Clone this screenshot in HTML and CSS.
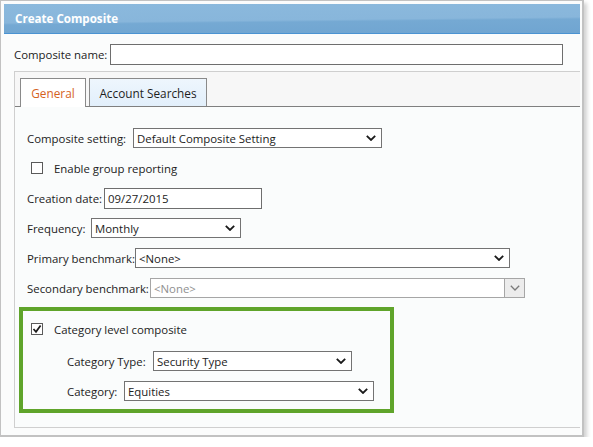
FILE: index.html
```html
<!DOCTYPE html>
<html>
<head>
<meta charset="utf-8">
<link rel="stylesheet" href="styles.css">
</head>
<body>
<div class="window">
  <div class="titlebar">Create Composite</div>
  <div class="body">
    <div class="name-row">
      <span class="label lbl-name">Composite name:</span>
      <div class="textbox name-input"></div>
    </div>
    <div class="panel">
      <div class="tabs">
        <div class="tab tab-active">General</div>
        <div class="tab tab-blue">Account Searches</div>
      </div>
      <div class="tab-content">
        <div class="row">
          <span class="label lbl-setting">Composite setting:</span>
          <div class="select sel-setting"><span>Default Composite Setting</span><svg class="chev" width="10" height="6" viewBox="0 0 10 6"><path d="M0.8 0.8 L5 5 L9.2 0.8"/></svg></div>
        </div>
        <div class="row">
          <span class="checkbox"></span>
          <span class="label check-label">Enable group reporting</span>
        </div>
        <div class="row">
          <span class="label lbl-date">Creation date:</span>
          <div class="textbox date-input">09/27/2015</div>
        </div>
        <div class="row">
          <span class="label lbl-freq">Frequency:</span>
          <div class="select sel-freq"><span>Monthly</span><svg class="chev" width="10" height="6" viewBox="0 0 10 6"><path d="M0.8 0.8 L5 5 L9.2 0.8"/></svg></div>
        </div>
        <div class="row">
          <span class="label lbl-primary">Primary benchmark:</span>
          <div class="select sel-primary"><span>&lt;None&gt;</span><svg class="chev" width="10" height="6" viewBox="0 0 10 6"><path d="M0.8 0.8 L5 5 L9.2 0.8"/></svg></div>
        </div>
        <div class="row">
          <span class="label lbl-secondary">Secondary benchmark:</span>
          <div class="select select-disabled sel-secondary"><span>&lt;None&gt;</span><span class="drop-btn"><svg class="chev chev-dis" width="10" height="6" viewBox="0 0 10 6"><path d="M0.8 0.8 L5 5 L9.2 0.8"/></svg></span></div>
        </div>
        <div class="highlight">
          <div class="row row-in">
            <span class="checkbox checked"><svg width="10" height="10" viewBox="0 0 10 10"><path d="M1.5 5 L4 7.8 L8.6 1.4"/></svg></span>
            <span class="label check-label">Category level composite</span>
          </div>
          <div class="row row-sub">
            <span class="label lbl-cattype">Category Type:</span>
            <div class="select sel-cattype"><span>Security Type</span><svg class="chev" width="10" height="6" viewBox="0 0 10 6"><path d="M0.8 0.8 L5 5 L9.2 0.8"/></svg></div>
          </div>
          <div class="row row-sub">
            <span class="label lbl-cat">Category:</span>
            <div class="select sel-cat"><span>Equities</span><svg class="chev" width="10" height="6" viewBox="0 0 10 6"><path d="M0.8 0.8 L5 5 L9.2 0.8"/></svg></div>
          </div>
        </div>
      </div>
    </div>
  </div>
</div>
</body>
</html>
```
FILE: styles.css
```css
html, body {
  margin: 0;
  padding: 0;
  background: #ffffff;
}

body {
  font-family: "Open Sans", "Noto Sans", sans-serif;
  font-size: 11.4px;
  color: #222222;
}

.window {
  box-sizing: border-box;
  width: 584px;
  height: 437px;
  border: 1px solid #c2c2c2;
  border-right-width: 2px;
  border-bottom-width: 2px;
  padding: 3px 2px 0 3px;
  background: #fbfcfc;
  box-shadow: 3px 3px 4px rgba(0, 0, 0, 0.18);
}

.titlebar {
  height: 29px;
  border-bottom: 1px solid #4a93d2;
  background: linear-gradient(179.4deg, #8bb9dd 0%, #88b6db 54%, #75a9d3 60%, #70a5d1 100%);
  color: #ffffff;
  font-weight: 700;
  font-size: 11.6px;
  display: flex;
  align-items: center;
  padding-left: 11px;
}

.body {
  padding: 10px 0 0 10px;
}

.name-row {
  display: flex;
  align-items: center;
  height: 21px;
}

.label {
  white-space: nowrap;
  flex: none;
}

.lbl-name { width: 96px; }

.textbox {
  box-sizing: border-box;
  height: 21px;
  border: 1px solid #6e6e6e;
  background: #ffffff;
  display: flex;
  align-items: center;
  padding-left: 3px;
}

.name-input { width: 453px; }

.panel {
  margin-top: 6px;
  border-top: 1px solid #cfcfcf;
  border-left: 1px solid #cfcfcf;
  border-bottom: 1px solid #cfcfcf;
}

.tabs {
  display: flex;
  align-items: flex-end;
  gap: 3px;
  height: 34px;
  padding-left: 5px;
  background: #f7f7f7;
  border-bottom: 1px solid #7f7f7f;
}

.tab {
  box-sizing: border-box;
  height: 28px;
  border: 1px solid #8a8a8a;
  border-bottom: none;
  display: flex;
  align-items: center;
  justify-content: center;
  font-size: 11.8px;
}

.tab-active {
  width: 66px;
  height: 29px;
  margin-bottom: -1px;
  background: #ffffff;
  color: #d5621e;
}

.tab-blue {
  width: 118px;
  background: linear-gradient(180deg, #eef6fd 0%, #e2effb 100%);
  color: #1e1e1e;
}

.tab-content {
  height: 320px;
  box-sizing: border-box;
  padding: 21px 0 0 4px;
  background: #fafcfc;
}

.row {
  display: flex;
  align-items: center;
  height: 20px;
  margin-bottom: 10px;
  padding-left: 8px;
}

.checkbox {
  box-sizing: border-box;
  width: 12px;
  height: 12px;
  margin-left: 4px;
  border: 1px solid #5a5a5a;
  background: #ffffff;
  flex: none;
  display: flex;
  align-items: center;
  justify-content: center;
}

.checkbox svg path {
  fill: none;
  stroke: #1c1c1c;
  stroke-width: 1.7;
}

.check-label {
  margin-left: 11px;
}

.select {
  box-sizing: border-box;
  height: 20px;
  border: 1px solid #737373;
  background: #ffffff;
  display: flex;
  align-items: center;
  padding-left: 3px;
  flex: none;
}

.chev {
  margin-left: auto;
  margin-right: 5px;
  flex: none;
}

.chev path {
  fill: none;
  stroke: #1a1a1a;
  stroke-width: 1.8;
}

.select-disabled {
  border-color: #a6a6a6;
  color: #909090;
}

.drop-btn {
  box-sizing: border-box;
  margin-left: auto;
  width: 21px;
  height: 20px;
  margin-right: -1px;
  border: 1px solid #a6a6a6;
  background: #ececec;
  display: flex;
  align-items: center;
  justify-content: center;
}

.drop-btn .chev {
  margin: 0;
}

.chev-dis path {
  stroke: #7a7a7a;
  stroke-width: 1.3;
}

.lbl-setting { width: 106px; }
.sel-setting { width: 249px; }

.lbl-date { width: 77px; }
.date-input { width: 158px; }

.lbl-freq { width: 64px; }
.sel-freq { width: 150px; }

.lbl-primary { width: 108px; }
.sel-primary { width: 375px; }

.lbl-secondary { width: 123px; }
.sel-secondary { width: 375px; }

.highlight {
  box-sizing: border-box;
  width: 375px;
  height: 106px;
  margin-top: -1px;
  border: 4px solid #5fa42a;
  padding-top: 8px;
}

.row-in {
  padding-left: 4px;
  margin-bottom: 12px;
}

.row-sub {
  padding-left: 44px;
}

.lbl-cattype { width: 86px; }
.sel-cattype { width: 199px; }

.lbl-cat { width: 57px; }
.sel-cat { width: 250px; }
```
